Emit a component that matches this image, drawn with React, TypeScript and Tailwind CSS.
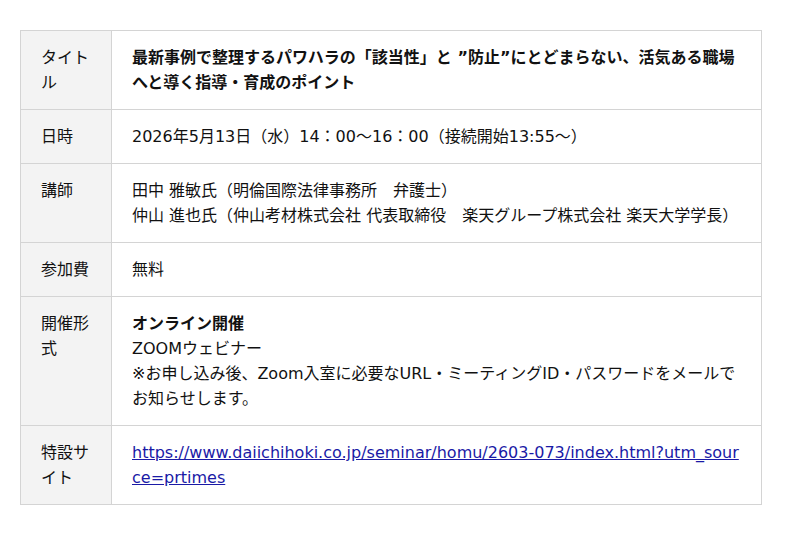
export default function App() {
  const th = "w-[91px] bg-[#f3f3f3] border border-[#d4d4d4] px-[20px] py-[14px] text-left align-top font-normal";
  const td = "border border-[#d4d4d4] px-[20px] py-[14px] align-top";
  return (
    <div
      className="bg-white pl-[20px] pt-[30px] text-[16px] leading-[25px] text-[#111]"
      style={{ fontFamily: '"DejaVu Sans", "Noto Sans CJK JP", sans-serif' }}
    >
      <table className="w-[742px] border-collapse table-fixed">
        <tbody>
          <tr>
            <th className={th}>タイトル</th>
            <td className={td}>
              <span className="font-bold">
                最新事例で整理するパワハラの「該当性」と ”防止”にとどまらない、活気ある職場へと導く指導・育成のポイント
              </span>
            </td>
          </tr>
          <tr>
            <th className={th}>日時</th>
            <td className={td}>2026年5月13日（水）14：00〜16：00（接続開始13:55〜）</td>
          </tr>
          <tr>
            <th className={th}>講師</th>
            <td className={td}>
              田中 雅敏氏（明倫国際法律事務所　弁護士）
              <br />
              仲山 進也氏（仲山考材株式会社 代表取締役　楽天グループ株式会社 楽天大学学長）
            </td>
          </tr>
          <tr>
            <th className={th}>参加費</th>
            <td className={td}>無料</td>
          </tr>
          <tr>
            <th className={th}>開催形式</th>
            <td className={td}>
              <span className="font-bold">オンライン開催</span>
              <br />
              ZOOMウェビナー
              <br />
              ※お申し込み後、Zoom入室に必要なURL・ミーティングID・パスワードをメールでお知らせします。
            </td>
          </tr>
          <tr>
            <th className={th}>特設サイト</th>
            <td className={td}>
              <a
                href="#"
                className="text-[#1a1aa6] underline break-all"
              >
                https://www.daiichihoki.co.jp/seminar/homu/2603-073/index.html?utm_source=prtimes
              </a>
            </td>
          </tr>
        </tbody>
      </table>
    </div>
  );
}
